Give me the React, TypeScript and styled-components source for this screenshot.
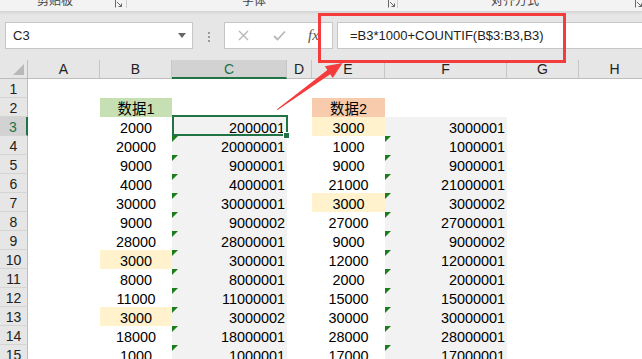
import React from "react";
import styled, { createGlobalStyle, css } from "styled-components";

const Global = createGlobalStyle`
  html, body { margin: 0; padding: 0; background: #fff; }
  body { overflow: hidden; }
`;

const FONT = `"Liberation Sans", "Noto Sans CJK SC", sans-serif`;
const GREEN = "#217346";
const RED = "#f53c3c";

const Page = styled.div`
  position: relative;
  width: 642px;
  height: 359px;
  overflow: hidden;
  background: #fff;
  font-family: ${FONT};
  color: #000;
`;

/* ---------- ribbon strip ---------- */
const Ribbon = styled.div`
  height: 11px;
  background: #f3f3f3;
  border-bottom: 1px solid #d6d6d6;
  display: flex;
  align-items: flex-start;
  overflow: hidden;
  position: relative;
  z-index: 1;
  box-shadow: 0 1px 2px rgba(0, 0, 0, 0.08);
`;

const Group = styled.div<{ $w: number }>`
  flex: 0 0 ${(p) => p.$w}px;
  display: flex;
  align-items: flex-end;
  border-right: 1px solid #cfcfcf;
  box-sizing: border-box;
  height: 8px;
`;

const GroupLabel = styled.div<{ $w: number }>`
  flex: 0 0 ${(p) => p.$w}px;
  text-align: center;
  font-size: 12px;
  line-height: 12px;
  color: #444;
  margin-bottom: 2px;
  font-family: "Noto Sans CJK SC", sans-serif;
`;

const Launcher = styled.svg<{ $ml: number }>`
  flex: 0 0 8px;
  width: 8px;
  height: 8px;
  margin-left: ${(p) => p.$ml}px;
`;

/* ---------- formula bar ---------- */
const FormulaBar = styled.div`
  height: 48px;
  background: #e6e6e6;
  display: flex;
  align-items: flex-start;
  padding: 10px 0 0 5px;
  box-sizing: border-box;
`;

const Box = styled.div`
  height: 27px;
  background: #fff;
  border: 1px solid #c6c6c6;
  box-sizing: border-box;
  display: flex;
  align-items: center;
`;

const NameBox = styled(Box)`
  width: 188px;
  padding: 0 6px 0 7px;
  justify-content: space-between;
  font-size: 13px;
  color: #222;
`;

const Caret = styled.span`
  width: 0;
  height: 0;
  border-left: 4px solid transparent;
  border-right: 4px solid transparent;
  border-top: 5px solid #666;
`;

const Dots = styled.div`
  width: 31px;
  display: flex;
  flex-direction: column;
  align-items: center;
  gap: 2px;
  padding-top: 10px;
  span {
    width: 2px;
    height: 2px;
    background: #9a9a9a;
  }
`;

const ButtonBox = styled(Box)`
  width: 109px;
  padding-left: 13px;
  color: #b5b5b5;
`;

const ToolIcon = styled.svg<{ $ml: number }>`
  margin-left: ${(p) => p.$ml}px;
  flex: none;
`;

const Fx = styled.span`
  font-family: "Liberation Serif", serif;
  font-style: italic;
  font-size: 15px;
  color: #555;
  margin-left: 22px;
`;

const FormulaInput = styled(Box)`
  flex: 1;
  margin-left: 4px;
  margin-right: -2px;
  padding-left: 12px;
  font-size: 13px;
  color: #222;
`;

/* ---------- sheet ---------- */
const Sheet = styled.div`
  display: grid;
  grid-template-columns: 28px 72px 72px 115px 25px 73px 122px 72px 72px;
  grid-auto-rows: 19px;
`;

const HeadBase = css`
  background: #e6e6e6;
  box-sizing: border-box;
  font-size: 14px;
  color: #222;
  display: flex;
  align-items: flex-end;
  justify-content: center;
  line-height: 16px;
`;

const Corner = styled.div`
  ${HeadBase};
  position: relative;
  border-right: 1px solid #bdbdbd;
  border-bottom: 1px solid #bdbdbd;
  &::after {
    content: "";
    position: absolute;
    right: 3px;
    bottom: 3px;
    width: 11px;
    height: 11px;
    background: #b9b9b9;
    clip-path: polygon(100% 0, 100% 100%, 0 100%);
  }
`;

const ColHead = styled.div<{ $sel?: boolean }>`
  ${HeadBase};
  border-right: 1px solid #c6c6c6;
  border-bottom: 1px solid #bdbdbd;
  padding-bottom: 1px;
  ${(p) =>
    p.$sel &&
    css`
      background: #d2d2d2;
      color: ${GREEN};
      border-bottom: 2px solid ${GREEN};
      padding-bottom: 0;
    `}
`;

const RowHead = styled.div<{ $sel?: boolean }>`
  ${HeadBase};
  border-right: 1px solid #bdbdbd;
  border-bottom: 1px solid #d4d4d4;
  ${(p) =>
    p.$sel &&
    css`
      background: #d2d2d2;
      color: ${GREEN};
      border-right: 2px solid ${GREEN};
    `}
`;

const Cell = styled.div<{
  $bg?: string;
  $right?: boolean;
  $flag?: boolean;
  $sel?: boolean;
}>`
  position: relative;
  background: ${(p) => p.$bg || "#fff"};
  font-size: 14.4px;
  line-height: 16px;
  display: flex;
  align-items: flex-end;
  justify-content: ${(p) => (p.$right ? "flex-end" : "center")};
  padding-right: ${(p) => (p.$right ? "2px" : "0")};
  white-space: nowrap;
  ${(p) =>
    p.$flag &&
    css`
      &::before {
        content: "";
        position: absolute;
        left: 0;
        top: 0;
        width: 6px;
        height: 6px;
        background: #1b7d1b;
        clip-path: polygon(0 0, 100% 0, 0 100%);
      }
    `}
  ${(p) =>
    p.$sel &&
    css`
      &::after {
        content: "";
        position: absolute;
        left: 0;
        top: -2px;
        right: -1px;
        bottom: 0;
        border: 2px solid ${GREEN};
        z-index: 2;
      }
    `}
`;

const FillHandle = styled.span`
  position: absolute;
  right: -3px;
  bottom: -3px;
  width: 5px;
  height: 5px;
  background: ${GREEN};
  border: 1px solid #fff;
  z-index: 3;
`;

/* ---------- annotations ---------- */
const Highlight = styled.div`
  position: absolute;
  left: 318px;
  top: 13px;
  width: 248px;
  height: 50px;
  border: 3px solid ${RED};
  box-sizing: border-box;
  z-index: 5;
`;

const Arrow = styled.svg`
  position: absolute;
  left: 0;
  top: 0;
  width: 642px;
  height: 359px;
  z-index: 6;
  pointer-events: none;
`;

const B = [2000, 20000, 9000, 4000, 30000, 9000, 28000, 3000, 8000, 11000, 3000, 18000, 1000];
const E = [3000, 1000, 9000, 21000, 3000, 27000, 9000, 12000, 2000, 15000, 30000, 28000, 17000];

function countify(list: number[]) {
  const seen: Record<number, number> = {};
  return list.map((v) => {
    seen[v] = (seen[v] || 0) + 1;
    return v * 1000 + seen[v];
  });
}

const C = countify(B);
const F = countify(E);

const YELLOW = "#fff2cc";
const GRAY = "#f2f2f2";

const cols = ["A", "B", "C", "D", "E", "F", "G", "H"];

const LauncherPath = () => (
  <path d="M0.5 0 V7.5 M2 2 L6.5 6.5 M6.5 3.5 V6.5 H3.5" stroke="#666" strokeWidth="1" fill="none" />
);

export default function App() {
  const rows: React.ReactNode[] = [];
  for (let r = 1; r <= 15; r++) {
    const i = r - 3;
    const data = r >= 3;
    rows.push(
      <React.Fragment key={r}>
        <RowHead $sel={r === 3}>{r}</RowHead>
        <Cell />
        <Cell $bg={r === 2 ? "#c6e0b4" : data && B[i] === 3000 ? YELLOW : undefined}>
          {r === 2 ? "数据1" : data ? B[i] : ""}
        </Cell>
        <Cell $bg={data ? GRAY : undefined} $right $flag={r >= 4} $sel={r === 3}>
          {data ? C[i] : ""}
          {r === 3 && <FillHandle />}
        </Cell>
        <Cell />
        <Cell $bg={r === 2 ? "#f8cbad" : data && E[i] === 3000 ? YELLOW : undefined}>
          {r === 2 ? "数据2" : data ? E[i] : ""}
        </Cell>
        <Cell $bg={data ? GRAY : undefined} $right $flag={r >= 4}>
          {data ? F[i] : ""}
        </Cell>
        <Cell />
        <Cell />
      </React.Fragment>
    );
  }

  return (
    <Page>
      <Global />
      <Ribbon>
        <Group $w={127}>
          <GroupLabel $w={110}>剪贴板</GroupLabel>
          <Launcher $ml={5} viewBox="0 0 8 8">
            <LauncherPath />
          </Launcher>
        </Group>
        <Group $w={271}>
          <GroupLabel $w={254}>字体</GroupLabel>
          <Launcher $ml={7} viewBox="0 0 8 8">
            <LauncherPath />
          </Launcher>
        </Group>
        <Group $w={260}>
          <GroupLabel $w={234}>对齐方式</GroupLabel>
          <Launcher $ml={3} viewBox="0 0 8 8">
            <LauncherPath />
          </Launcher>
        </Group>
      </Ribbon>
      <FormulaBar>
        <NameBox>
          <span>C3</span>
          <Caret />
        </NameBox>
        <Dots>
          <span />
          <span />
          <span />
        </Dots>
        <ButtonBox>
          <ToolIcon $ml={0} width="11" height="11" viewBox="0 0 11 11">
            <path d="M1 1 L10 10 M10 1 L1 10" stroke="#b8b8b8" strokeWidth="1.4" />
          </ToolIcon>
          <ToolIcon $ml={24} width="13" height="11" viewBox="0 0 13 11">
            <path d="M1 6 L4.5 9.5 L12 1.5" stroke="#b8b8b8" strokeWidth="1.8" fill="none" />
          </ToolIcon>
          <Fx>fx</Fx>
        </ButtonBox>
        <FormulaInput>=B3*1000+COUNTIF(B$3:B3,B3)</FormulaInput>
      </FormulaBar>
      <Sheet>
        <Corner />
        {cols.map((c) => (
          <ColHead key={c} $sel={c === "C"}>
            {c}
          </ColHead>
        ))}
        {rows}
      </Sheet>
      <Highlight />
      <Arrow viewBox="0 0 642 359">
        <polygon
          points="277,109.2 327.4,70.0 324.8,66.3 342.5,63 332.8,77.9 330.2,74.2 277.6,110"
          fill={RED}
        />
      </Arrow>
    </Page>
  );
}
